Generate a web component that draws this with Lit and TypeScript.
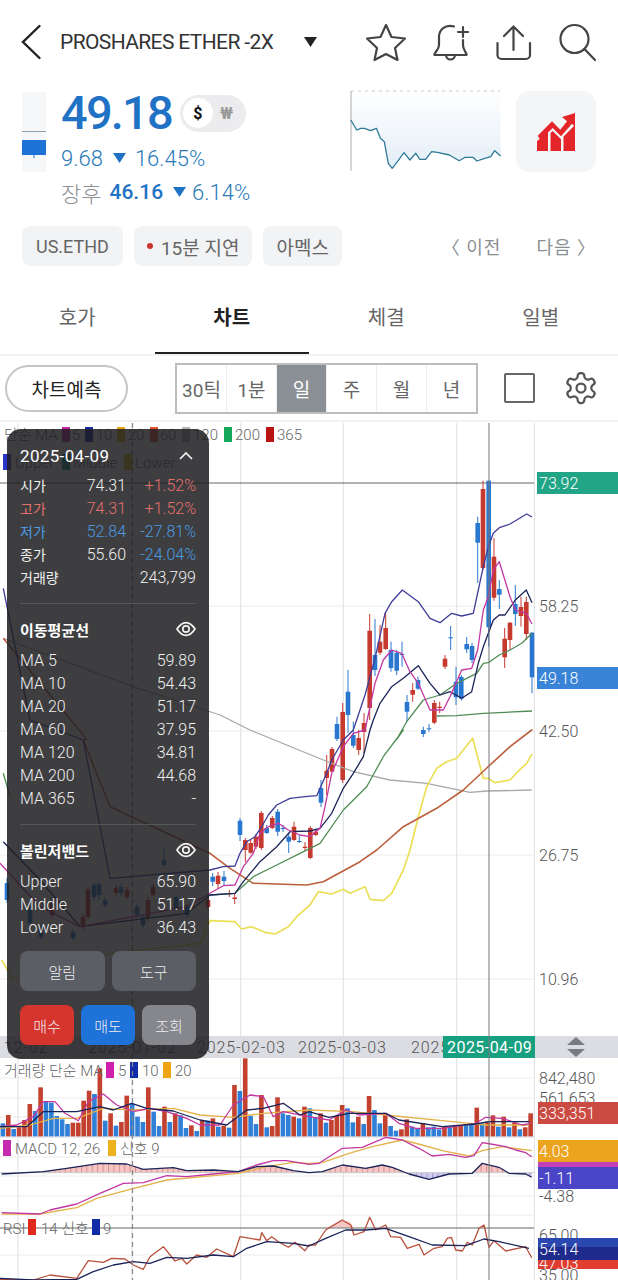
import { LitElement, html, svg, css } from 'lit';
import { customElement } from 'lit/decorators.js';

type Pt = [number, number];
// [x, wickTop, wickBottom, bodyTop, bodyBottom, isUp]
type Candle = [number, number, number, number, number, number];

// traced from 3x crops, so each series carries the crop origin
const traced = (ox: number, oy: number, pts: Pt[]) =>
  pts.map(([x, y]) => `${(ox + x / 3).toFixed(1)},${(oy + y / 3).toFixed(1)}`).join(' ');

const CANDLES: Candle[] = [
  [7, 878, 903, 883, 900, 0], [30, 905, 926, 910, 923, 0], [41, 924, 940, 927, 937, 0], [52, 898, 918, 903, 915, 1],
  [73, 929, 941, 932, 938, 0], [83, 914, 930, 917, 927, 1], [88, 887, 920, 890, 917, 1], [94, 882, 900, 885, 897, 0],
  [99, 882, 900, 884, 895, 0], [105, 897, 908, 900, 905, 0], [116, 885, 896, 888, 893, 1], [121, 884, 896, 887, 893, 0],
  [127, 887, 899, 890, 897, 1], [137, 904, 918, 907, 915, 0], [143, 914, 928, 917, 925, 0], [148, 897, 921, 900, 918, 1],
  [153, 884, 896, 887, 895, 1], [164, 847, 868, 860, 865, 0], [176, 894, 911, 897, 908, 0], [187, 904, 918, 907, 915, 0],
  [208, 897, 910, 900, 907, 1],
  [212.7, 873, 886, 876.7, 881.7, 0], [218, 872, 889, 875.7, 884, 1], [224, 871, 886, 876.7, 881, 0],
  [229.3, 890, 897, 893, 894, 1], [234.7, 894, 904, 897.5, 899, 1], [240, 818, 841, 820.7, 835, 0],
  [245.3, 838, 862, 840, 850, 1], [250.7, 840, 854, 843, 852.7, 1], [256, 834, 849, 836.7, 846.7, 1],
  [261.3, 811, 850, 813, 848, 1], [266.7, 825, 834, 828, 833, 0], [272.3, 816, 829, 818, 828, 1],
  [277.7, 809, 836, 811.7, 831.7, 0], [283, 825, 832, 828, 829, 0], [288.7, 833, 853, 836.7, 841.7, 0],
  [294, 821.7, 841, 826.7, 840, 1], [299.3, 835, 843, 841, 842, 0], [305, 842, 851, 846.7, 848, 1],
  [310.3, 826, 859, 828, 858, 1], [315.7, 830, 836, 831.7, 835, 1], [321, 780, 807, 788, 802.7, 0],
  [326.7, 755, 795, 770.7, 778, 1], [332, 747, 772, 749, 771.7, 1], [337, 716.7, 741, 724, 739, 0],
  [342.7, 703, 783, 712, 780, 1], [348, 670, 733, 691.7, 715, 0], [353.3, 721.7, 748, 735, 745.7, 0],
  [358.7, 730, 755, 738, 750, 1], [364, 713, 753, 723, 732, 1], [369.7, 614, 720, 630.7, 708, 1],
  [375, 619, 676, 655, 670, 0], [380, 625, 655, 641.7, 652.7, 1], [385.7, 613, 650, 628, 649, 1],
  [391, 641.7, 671.7, 650, 668, 0], [396.7, 650, 675, 652.7, 670.7, 0], [402, 641.7, 666.7, 654, 655, 0],
  [407, 695, 721.7, 702, 711.7, 0], [412.7, 683, 701.7, 690, 694.7, 1], [418, 676.7, 690, 680, 688.7, 0],
  [423.3, 726.7, 737, 730, 734, 0], [429, 724, 731.7, 728.3, 729.3, 0], [434.3, 700, 724, 703, 722.7, 1],
  [439.7, 701.7, 713, 706.7, 708, 1], [445, 655, 669, 658.7, 666.7, 1], [450.7, 626, 650, 637.3, 638.3, 0],
  [456, 666.7, 705, 681.7, 697.3, 0], [461.3, 675, 700.7, 677, 698.7, 0], [466.7, 637, 653, 644, 649.3, 0],
  [472, 643, 663, 646, 660, 0], [477.7, 516.7, 583, 523, 542.7, 0], [483, 480.7, 570, 489, 568, 1],
  [488.7, 480.7, 646.7, 480.7, 627.3, 0], [494, 538, 600.7, 556.7, 597.7, 1], [499.3, 580, 609, 589, 594.7, 0],
  [504.7, 628, 668, 638.7, 657.3, 1], [510, 622, 650, 622.7, 640, 1], [515.3, 585, 626, 604, 614, 0],
  [521, 596.7, 626.7, 607, 616, 1], [526.3, 596.7, 640, 602, 634, 1], [532, 632, 693.3, 632.7, 677.3, 0],
];

// bar tops in crop px; positive is red, negative is blue
const VOLUME = [
  -280, 255, -297, 292, 270, 222, -243, 172, -213, -218, -258, -268, -282, 278, 278, 212, 182, -192, 115, -272,
  250, -287, 276, 197, -222, -260, -276, 172, -245, -288, 230, -276, 250, -256, -294, 286, -303, 272, -272, 265,
  -290, 287, -293, 165, -183, 85, -258, -282, 195, -292, 288, 202, -250, -255, 260, -265, 230,
  -235, -262, 250, -278, 270, 258, 225, -235, -277, 260, -282, 198, -240, -280, 252, -288, -302, 298, 268, -290,
  -295, 280, -292, -290, -298, 288, -290, 285, 285, -283, -283, 233, -280, 275, 256, -290, 260, -292, 278, -298, 292, 250,
];

const MID_X = 309;
const LOW_Y = 1030;

const mainLines: { cls: string; pts: string }[] = [
  { cls: 'gray', pts: traced(0, 420, [[10, 655], [400, 800], [660, 885]]) + ' ' + traced(210, 730, [[120, 0], [340, 90], [430, 125], [540, 150], [650, 160], [780, 187], [830, 183], [965, 180]]) },
  { cls: 'yellow', pts: traced(0, 740, [[5, 660], [40, 720], [330, 640], [600, 610]]) + ' ' + traced(210, 730, [[0, 572], [75, 575], [95, 597], [125, 590], [165, 607], [195, 612], [235, 590], [260, 560], [300, 525], [325, 485], [365, 492], [400, 478], [420, 490], [465, 470], [480, 508], [520, 512], [545, 490], [580, 420], [600, 360], [625, 260], [650, 170], [680, 115], [710, 95], [740, 85], [788, 25], [820, 145], [835, 145], [855, 158], [900, 150], [930, 118], [950, 100], [966, 72]]) },
  { cls: 'orange', pts: traced(0, 420, [[10, 655], [130, 800], [260, 958]]) + ' ' + traced(0, 740, [[250, 0], [330, 200], [620, 335]]) + ' ' + traced(210, 730, [[0, 370], [60, 415], [130, 460], [200, 462], [290, 465], [340, 455], [450, 395], [500, 360], [580, 290], [680, 235], [760, 180], [840, 105], [900, 50], [965, 0]]) + ' ' + traced(210, 420, [[966, 928]]) },
  { cls: 'green', pts: traced(210, 420, [[680, 888], [740, 887], [820, 880], [966, 873]]) },
  { cls: 'green', pts: traced(0, 740, [[10, 100], [30, 170]]) },
  { cls: 'green', pts: traced(210, 730, [[0, 495], [75, 490], [130, 440], [200, 405], [270, 370], [330, 340], [400, 240], [470, 170], [520, 80], [580, 0]]) + ' ' + traced(210, 420, [[560, 958], [590, 905], [640, 840], [690, 825], [740, 790], [800, 760], [820, 730], [835, 728], [868, 705], [900, 690], [935, 670], [966, 640]]) },
  { cls: 'navy', pts: traced(0, 740, [[10, 305], [120, 420], [240, 560], [560, 520]]) + ' ' + traced(210, 730, [[0, 495], [75, 490], [100, 455], [150, 395], [200, 350], [240, 305], [300, 303], [330, 295], [365, 250], [400, 175], [430, 130], [460, 80], [480, 0]]) + ' ' + traced(210, 420, [[490, 900], [510, 850], [545, 800], [580, 775], [625, 737], [660, 790], [690, 825], [720, 815], [755, 835], [785, 815], [805, 730], [820, 680], [850, 600], [868, 585], [885, 585], [916, 540], [949, 510], [966, 548]]) },
  { cls: 'magenta', pts: traced(0, 740, [[0, 370], [120, 500], [240, 560], [560, 500]]) + ' ' + traced(210, 730, [[0, 490], [40, 467], [75, 465], [100, 410], [130, 370], [150, 310], [175, 290], [205, 280], [235, 300], [270, 315], [300, 320], [330, 295], [345, 230], [365, 130], [400, 50], [430, 10], [465, 0]]) + ' ' + traced(210, 420, [[495, 790], [520, 720], [545, 690], [575, 700], [600, 755], [625, 790], [660, 870], [700, 870], [720, 830], [755, 750], [785, 745], [803, 690], [820, 570], [835, 530], [850, 450], [868, 425], [900, 530], [916, 570], [949, 580], [966, 612]]) },
  { cls: 'violet', pts: traced(0, 420, [[10, 505], [90, 900]]) + ' ' + traced(0, 740, [[250, 0], [330, 415], [630, 390]]) + ' ' + traced(210, 730, [[0, 420], [40, 410], [75, 408], [90, 370], [110, 335], [135, 320], [155, 290], [175, 255], [200, 225], [240, 205], [285, 200], [320, 197], [350, 130], [365, 90], [400, 30], [430, 0]]) + ' ' + traced(210, 420, [[465, 825], [495, 715], [525, 580], [545, 545], [577, 510], [625, 545], [660, 595], [690, 608], [725, 580], [755, 588], [790, 580], [805, 510], [820, 440], [835, 380], [850, 340], [868, 323], [900, 312], [950, 282], [966, 291]]) },
];

const volLines: { cls: string; pts: string }[] = [
  { cls: 'gold', pts: traced(0, LOW_Y, [[0, 295], [90, 285], [160, 265], [230, 265], [310, 235], [400, 240], [520, 235], [600, 255], [700, 262], [790, 250], [927, 240]]) + ' ' + traced(MID_X, LOW_Y, [[130, 245], [230, 255], [430, 275], [530, 285], [660, 285]]) },
  { cls: 'magenta', pts: traced(0, LOW_Y, [[0, 290], [50, 285], [100, 260], [130, 215], [165, 215], [195, 250], [235, 272], [265, 215], [310, 192], [350, 225], [400, 245], [450, 235], [500, 245], [560, 265], [600, 285], [660, 285], [700, 225], [750, 195], [790, 200], [820, 260], [850, 245], [927, 260]]) + ' ' + traced(MID_X, LOW_Y, [[60, 270], [110, 240], [150, 255], [230, 250], [270, 280], [320, 295], [400, 295], [500, 280], [530, 262], [580, 265], [640, 285], [665, 280]]) },
  { cls: 'navy', pts: traced(0, LOW_Y, [[0, 290], [80, 290], [130, 245], [230, 245], [300, 230], [340, 240], [395, 220], [440, 235], [520, 243], [600, 270], [680, 285], [740, 240], [790, 235], [850, 220], [900, 255], [927, 245]]) + ' ' + traced(MID_X, LOW_Y, [[60, 262], [120, 250], [230, 250], [270, 270], [400, 290], [500, 282], [540, 275], [660, 275]]) },
];

const histPts = traced(0, LOW_Y, [[5, 432], [130, 425], [200, 415], [300, 400], [380, 402], [430, 418], [520, 413], [560, 422], [640, 420], [715, 425], [770, 410], [820, 408], [880, 422], [927, 428]]) + ' ' + traced(MID_X, LOW_Y, [[40, 425], [100, 405], [170, 415], [220, 405], [250, 412], [300, 432], [360, 448], [420, 432], [490, 430], [520, 400], [570, 412], [600, 430], [650, 432], [668, 442]]);

const macdLines: { cls: string; pts: string }[] = [
  { cls: 'gold', pts: traced(0, LOW_Y, [[5, 552], [120, 552], [230, 533], [290, 505], [390, 478], [500, 450], [640, 437], [715, 430], [800, 410], [880, 397], [927, 400]]) + ' ' + traced(MID_X, LOW_Y, [[40, 398], [120, 370], [190, 350], [280, 330], [340, 345], [400, 362], [480, 378], [520, 362], [580, 350], [668, 362]]) },
  { cls: 'magenta', pts: traced(0, LOW_Y, [[5, 548], [120, 552], [150, 540], [230, 522], [300, 490], [370, 460], [430, 458], [500, 437], [560, 440], [640, 432], [715, 425], [770, 405], [820, 392], [860, 392], [927, 403]]) + ' ' + traced(MID_X, LOW_Y, [[30, 400], [100, 355], [160, 352], [230, 322], [280, 330], [330, 355], [370, 378], [420, 373], [470, 382], [495, 377], [520, 338], [545, 342], [590, 350], [620, 360], [650, 368], [668, 380]]) },
  { cls: 'navy', pts: histPts },
];

const rsiLines: { cls: string; pts: string }[] = [
  { cls: 'brick', pts: traced(0, LOW_Y, [[0, 748], [100, 750], [150, 735], [230, 745], [265, 692], [310, 697], [335, 685], [375, 687], [400, 705], [430, 718], [450, 680], [490, 650], [525, 693], [545, 685], [560, 702], [590, 675], [620, 682], [650, 657], [700, 680], [720, 620], [780, 630], [785, 608], [800, 632], [815, 620], [835, 635], [865, 652], [885, 637], [915, 662], [927, 645]]) + ' ' + traced(MID_X, LOW_Y, [[20, 645], [50, 600], [100, 570], [125, 585], [135, 615], [165, 605], [182, 562], [200, 600], [230, 585], [245, 620], [275, 622], [295, 655], [330, 643], [345, 675], [375, 655], [400, 650], [415, 625], [427, 622], [440, 660], [460, 663], [475, 637], [490, 645], [510, 595], [525, 585], [540, 652], [555, 632], [590, 663], [650, 650], [668, 683]]) },
  { cls: 'navy', pts: traced(0, LOW_Y, [[0, 745], [100, 750], [230, 748], [280, 725], [340, 705], [400, 695], [450, 700], [500, 682], [560, 685], [640, 675], [700, 680], [740, 655], [800, 635], [880, 640], [927, 648]]) + ' ' + traced(MID_X, LOW_Y, [[50, 625], [110, 600], [170, 600], [230, 595], [300, 620], [370, 645], [470, 647], [525, 627], [570, 635], [660, 655]]) },
];

const SPARK: Pt[] = [
  [890, 360], [905, 390], [915, 385], [925, 385], [940, 392], [955, 385], [965, 415], [975, 425], [985, 490], [995, 505],
  [1005, 490], [1025, 458], [1040, 480], [1055, 460], [1065, 478], [1080, 478], [1095, 455], [1110, 457], [1140, 465],
  [1165, 482], [1180, 472], [1200, 472], [1210, 483], [1230, 475], [1245, 470], [1255, 452], [1270, 468],
];

const MA_ROWS = [
  ['MA 5', '59.89'], ['MA 10', '54.43'], ['MA 20', '51.17'], ['MA 60', '37.95'],
  ['MA 120', '34.81'], ['MA 200', '44.68'], ['MA 365', '-'],
];
const BB_ROWS = [['Upper', '65.90'], ['Middle', '51.17'], ['Lower', '36.43']];
const OHLC = [
  { label: '시가', value: '74.31', pct: '+1.52%', tone: '', pctTone: 'up' },
  { label: '고가', value: '74.31', pct: '+1.52%', tone: 'up', pctTone: 'up' },
  { label: '저가', value: '52.84', pct: '-27.81%', tone: 'down', pctTone: 'down' },
  { label: '종가', value: '55.60', pct: '-24.04%', tone: '', pctTone: 'down' },
];
const PERIODS = ['30틱', '1분', '일', '주', '월', '년'];

@customElement('app-root')
export class AppRoot extends LitElement {
  static styles = css`
    :host {
      display: block;
      width: 618px;
      height: 1280px;
      overflow: hidden;
      background: #fff;
      font-family: Roboto, "Noto Sans CJK KR", sans-serif;
      color: #333;
    }

    .top {
      display: flex;
      align-items: center;
      height: 84px;
      padding-left: 20px;
    }
    .back { width: 22px; height: 36px; margin-right: 18px; }
    .title { font-size: 21px; color: #333; letter-spacing: -0.62px; white-space: nowrap; }
    .caret { margin-left: 31px; width: 13px; height: 10px; }
    .actions { display: flex; gap: 28px; margin-left: auto; padding-right: 22px; }
    .actions svg { width: 36px; height: 36px; overflow: visible; fill: none; stroke: #444; stroke-width: 2.2; stroke-linecap: round; stroke-linejoin: round; }

    .quote { display: flex; align-items: flex-start; height: 134px; padding: 8px 22px 0; box-sizing: content-box; }
    .mini { width: 24px; height: 80px; margin-right: 15px; overflow: hidden; flex: none; }
    .prices { width: 289px; flex: none; }
    .price-row { display: flex; align-items: center; height: 42px; }
    .price { font-size: 47px; line-height: 42px; font-weight: 500; color: #1f72c4; letter-spacing: -1.8px; }
    .currency { display: flex; align-items: center; width: 66px; height: 37px; margin-left: 8px; border-radius: 19px; background: #ececee; }
    .currency b { display: flex; align-items: center; justify-content: center; width: 30px; height: 30px; margin-left: 3px; border-radius: 50%; background: #fff; font-size: 16px; color: #111; }
    .currency span { margin-left: 7px; font-size: 16px; font-weight: 700; color: #999; }
    .change { display: flex; align-items: center; height: 36px; margin-top: 6px; font-size: 22px; font-weight: 300; color: #2a7ab8; }
    .change.after { height: 34px; margin-top: -1px; }
    .tri { width: 13px; height: 10px; margin: 0 9px 0 10px; fill: #1f72c4; }
    .change.after .tri { margin: 0 6px 0 10px; }
    .after-label { font-size: 22px; color: #8b9095; margin-right: 8px; }
    .after-price { font-weight: 500; color: #1f72c4; font-size: 21px; }
    .spark { width: 151px; height: 82px; margin-top: -2px; flex: none; }
    .badge { display: flex; align-items: center; justify-content: center; width: 80px; height: 81px; margin: -1px 0 0 15px; border-radius: 14px; background: #f4f5f7; flex: none; }
    .badge svg { width: 38px; height: 38px; }

    .chips { display: flex; align-items: center; height: 40px; padding: 0 22px; gap: 11px; }
    .chip { display: flex; align-items: center; height: 40px; padding: 0 13px; border-radius: 8px; background: #f2f3f4; font-size: 19px; color: #666; white-space: nowrap; }
    .chip.code { font-size: 18px; padding: 0 14px; }
    .chip i { width: 6px; height: 6px; margin-right: 8px; border-radius: 50%; background: #c9342c; }
    .pager { display: flex; gap: 35px; margin-left: auto; font-size: 18px; color: #8a8f94; letter-spacing: 1px; white-space: nowrap; }

    .tabs { display: grid; grid-template-columns: repeat(4, 154.5px); height: 74px; margin-top: 14px; }
    .tab { display: flex; align-items: center; justify-content: center; font-size: 20px; color: #666; border-bottom: 2px solid transparent; }
    .tab.on { font-weight: 700; color: #222; border-bottom-color: #222; }

    .tools { display: flex; align-items: center; height: 68px; border-top: 2px solid #f1f1f2; border-bottom: 2px solid #f1f1f2; box-sizing: border-box; }
    .predict { display: flex; align-items: center; justify-content: center; width: 123px; height: 47px; margin-left: 5px; box-sizing: border-box; border: 2px solid #c6c6c6; border-radius: 24px; font-size: 19px; color: #222; }
    .periods { display: flex; width: 303px; height: 51px; margin-left: 47px; box-sizing: border-box; border: 2px solid #bdbdbd; }
    .period { flex: 1; display: flex; align-items: center; justify-content: center; border-right: 1px solid #eee; font-size: 19px; color: #666; white-space: nowrap; }
    .period:last-child { border-right: 0; }
    .period.on { background: #8b8f96; color: #fff; }
    .square { width: 31px; height: 30px; margin-left: 26px; box-sizing: border-box; border: 2.5px solid #666; border-radius: 2px; }
    .gear { width: 36px; height: 36px; margin-left: 28px; fill: none; stroke: #555; stroke-width: 1.5; stroke-linejoin: round; }

    .chart { position: relative; height: 858px; }
    .chart > svg { display: block; width: 618px; height: 858px; }
    polyline { fill: none; stroke-width: 1.3; stroke-linejoin: round; }
    .gray { stroke: #a8a8a6; }
    .yellow { stroke: #ecdf58; stroke-width: 1.7; }
    .orange { stroke: #bc5f3c; stroke-width: 1.6; }
    .green { stroke: #4f8d55; }
    .navy { stroke: #1b2458; }
    .magenta { stroke: #c237a2; }
    .violet { stroke: #3f3c98; }
    .gold { stroke: #e3b24a; }
    .brick { stroke: #b8503c; }
    .grid line { stroke: #ececee; stroke-width: 1; }
    .grid .v { stroke: #dedfe3; }
    .axis-text { font-size: 16px; font-weight: 300; fill: #555; }
    .date-text { font-size: 16px; font-weight: 300; fill: #555; letter-spacing: 0.85px; }
    .legend { font-size: 15px; font-weight: 300; fill: #666; }
    .tag-text { font-size: 16px; font-weight: 300; fill: #fff; }
    .tag-date { font-size: 16px; fill: #fff; letter-spacing: 0.45px; }

    .panel {
      position: absolute;
      left: 7px;
      top: 7px;
      width: 202px;
      height: 630px;
      box-sizing: border-box;
      padding: 15px 13px 13px;
      border-radius: 14px;
      background: rgba(30, 30, 34, 0.86);
      color: #f0f0f0;
      font-weight: 300;
    }
    .head { display: flex; align-items: center; justify-content: space-between; height: 24px; font-size: 17px; font-weight: 400; color: #fff; letter-spacing: 0.35px; }
    .head.strong { font-size: 15px; font-weight: 700; letter-spacing: 0; }
    .head svg { width: 20px; height: 16px; fill: none; stroke: #f2f2f2; stroke-width: 1.7; }
    .rows { margin-top: 5.5px; }
    .ohlc { display: grid; grid-template-columns: 42px 64px 70px; align-items: center; height: 23px; font-size: 16px; white-space: nowrap; }
    .ohlc .k { font-size: 14px; font-weight: 400; }
    .ohlc span:nth-child(2), .ohlc span:nth-child(3) { text-align: right; }
    .ohlc .wide { grid-column: 2 / 4; text-align: right; }
    .up { color: #e5716b; }
    .down { color: #4b9be0; }
    .rule { height: 1px; margin: 14.5px 0 13px; background: #56565b; }
    .list { margin-top: 7.5px; }
    .line { display: flex; justify-content: space-between; align-items: center; height: 23px; font-size: 16px; }
    .buttons { display: grid; grid-template-columns: 1fr 1fr; gap: 7px; margin-top: 12.5px; }
    .buttons.three { grid-template-columns: repeat(3, 1fr); margin-top: 14px; }
    .btn { display: flex; align-items: center; justify-content: center; height: 40px; border-radius: 8px; background: #5b5e64; font-size: 15px; color: #eee; }
    .btn.buy { background: #d5352d; }
    .btn.sell { background: #1e72d8; }
    .btn.view { background: #85878d; }
  `;

  private candle([x, wt, wb, bt, bb, up]: Candle) {
    const color = up ? '#c6392f' : '#2a77cf';
    return svg`
      <line x1=${x} x2=${x} y1=${wt} y2=${wb} stroke=${color} stroke-width="1"></line>
      <rect x=${x - 2.3} y=${bt} width="4.6" height=${Math.max(bb - bt, 1)} fill=${color}></rect>`;
  }

  private swatch(x: number, y: number, color: string, h = 15) {
    return svg`<rect x=${x} y=${y} width="8" height=${h} fill=${color}></rect>`;
  }

  private tag(y: number, color: string, label: string, x = 537) {
    return svg`
      <rect x=${x} y=${y} width=${618 - x} height="22" fill=${color}></rect>
      <text class="tag-text" x="539" y=${y + 17}>${label}</text>`;
  }

  private renderChart() {
    const hLines = [606, 731, 855, 979, 1078, 1098, 1117, 1157, 1176, 1196, 1215, 1255];
    const vLines = [18, 132, 240.7, 343.3, 456.7];
    const axisLabels: [number, string][] = [[606, '58.25'], [731, '42.50'], [855, '26.75'], [979, '10.96']];
    return html`
      <svg viewBox="0 422 618 858">
        <defs>
          <pattern id="histUp" width="5.4" height="8" patternUnits="userSpaceOnUse">
            <rect width="5.4" height="8" fill="#f6c6c4"></rect>
            <rect width="1" height="8" fill="#d98f8d"></rect>
          </pattern>
          <pattern id="histDown" width="5.4" height="8" patternUnits="userSpaceOnUse">
            <rect width="5.4" height="8" fill="#d2cdf0"></rect>
            <rect width="1" height="8" fill="#9c96d4"></rect>
          </pattern>
          <clipPath id="aboveZero"><rect x="0" y="1100" width="534" height="72.7"></rect></clipPath>
          <clipPath id="belowZero"><rect x="0" y="1172.7" width="534" height="40"></rect></clipPath>
        </defs>

        <g class="grid">
          ${hLines.map((y) => svg`<line x1="0" x2="534" y1=${y} y2=${y}></line>`)}
          ${vLines.map((x) => svg`<line class="v" x1=${x} x2=${x} y1="423" y2="1280"></line>`)}
          <line class="v" x1="534.3" x2="534.3" y1="423" y2="1280"></line>
        </g>
        <line x1="0" x2="534" y1="483" y2="483" stroke="#666" stroke-width="1"></line>

        ${CANDLES.map((c) => this.candle(c))}
        ${mainLines.map((l) => svg`<polyline class=${l.cls} points=${l.pts}></polyline>`)}

        <text class="legend" x="4" y="440">단순 MA</text>
        ${this.swatch(62, 427, '#c2259f')}<text class="legend" x="72" y="440">5</text>
        ${this.swatch(85, 427, '#1630a0')}<text class="legend" x="96" y="440">10</text>
        ${this.swatch(117, 427, '#e8a414')}<text class="legend" x="128" y="440">20</text>
        ${this.swatch(150, 427, '#e4502a')}<text class="legend" x="160" y="440">60</text>
        ${this.swatch(182, 427, '#b4b4b4')}<text class="legend" x="193" y="440">120</text>
        ${this.swatch(224, 427, '#14a85a')}<text class="legend" x="235" y="440">200</text>
        ${this.swatch(266, 427, '#b81414')}<text class="legend" x="277" y="440">365</text>
        ${this.swatch(3, 454, '#2a35c8', 16)}<text class="legend" x="15" y="468">Upper</text>
        ${this.swatch(62, 454, '#1f8f6a', 16)}<text class="legend" x="73" y="468">Middle</text>
        ${this.swatch(124, 454, '#d8b020', 16)}<text class="legend" x="135" y="468">Lower</text>

        ${this.tag(472, '#22a586', '73.92')}
        ${this.tag(667, '#3a84d8', '49.18')}
        ${axisLabels.map(([y, t]) => svg`<text class="axis-text" x="539" y=${y + 6}>${t}</text>`)}

        <rect x="0" y="1036" width="618" height="22" fill="#dcdde3"></rect>
        <text class="date-text" x="4" y="1053">12-02</text>
        <text class="date-text" x="88" y="1053">2025-01-02</text>
        <text class="date-text" x="197" y="1053">2025-02-03</text>
        <text class="date-text" x="298" y="1053">2025-03-03</text>
        <text class="date-text" x="411" y="1053">2025</text>
        <rect x="443" y="1036" width="92" height="22" fill="#17a080"></rect>
        <text class="tag-date" x="447" y="1053">2025-04-09</text>
        <path d="M576 1037l9 8h-18zM576 1057l9-8h-18z" fill="#777b84"></path>

        ${VOLUME.map((v, i) => {
          const top = LOW_Y + Math.abs(v) / 3;
          return svg`<rect x=${0.6 + i * 5.385} y=${top} width="4.6" height=${1136.7 - top} fill=${v > 0 ? '#c2412f' : '#2f80d6'}></rect>`;
        })}
        ${volLines.map((l) => svg`<polyline class=${l.cls} points=${l.pts}></polyline>`)}
        <text class="legend" x="4" y="1076">거래량 단순 MA</text>
        ${this.swatch(106, 1062, '#d21fae', 16)}<text class="legend" x="118" y="1076">5</text>
        ${this.swatch(130, 1062, '#0f2ba8', 16)}<text class="legend" x="142" y="1076">10</text>
        ${this.swatch(163, 1062, '#f0a414', 16)}<text class="legend" x="175" y="1076">20</text>
        <line x1="0" x2="534" y1="1137" y2="1137" stroke="#d8d8dc"></line>

        <polygon points="${histPts} 532,1172.7 2,1172.7" fill="url(#histUp)" clip-path="url(#aboveZero)"></polygon>
        <polygon points="${histPts} 532,1172.7 2,1172.7" fill="url(#histDown)" clip-path="url(#belowZero)"></polygon>
        <line x1="0" x2="534" y1="1172.7" y2="1172.7" stroke="#c8c8cc"></line>
        ${macdLines.map((l) => svg`<polyline class=${l.cls} points=${l.pts}></polyline>`)}
        ${this.swatch(3, 1140, '#c62cb0', 16)}<text class="legend" x="15" y="1154">MACD 12, 26</text>
        ${this.swatch(108, 1140, '#efb21c', 16)}<text class="legend" x="120" y="1154">신호 9</text>

        <polygon points="326,1228 341,1220 350,1222 354,1228" fill="#f6c6c4"></polygon>
        <line x1="0" x2="534" y1="1228" y2="1228" stroke="#999" stroke-width="1.5"></line>
        ${rsiLines.map((l) => svg`<polyline class=${l.cls} points=${l.pts}></polyline>`)}
        <text class="legend" x="3" y="1234">RSI</text>
        ${this.swatch(28, 1219, '#e0281c', 16)}<text class="legend" x="41" y="1234">14 신호</text>
        ${this.swatch(92, 1219, '#0f2ba8', 16)}<text class="legend" x="103" y="1234">9</text>

        <text class="axis-text" x="539" y="1084">842,480</text>
        <text class="axis-text" x="539" y="1104">561,653</text>
        ${this.tag(1102, '#cb4a42', '333,351', 538)}
        <rect x="538" y="1162" width="80" height="6" fill="#c341b6"></rect>
        ${this.tag(1140, '#eca31d', '4.03', 538)}
        ${this.tag(1167, '#4a44c6', '-1.11', 538)}
        <text class="axis-text" x="539" y="1202">-4.38</text>
        <text class="axis-text" x="539" y="1241">65.00</text>
        <rect x="538" y="1260" width="80" height="9" fill="#e03c30"></rect>
        <text class="tag-text" x="539" y="1269">47.03</text>
        <rect x="538" y="1238" width="80" height="22" fill="#2a48b0"></rect>
        <rect x="538" y="1247" width="80" height="13" fill="#1e2a8c"></rect>
        <text class="tag-text" x="539" y="1255">54.14</text>
        <text class="axis-text" x="539" y="1281">35.00</text>

        <line x1="489" x2="489" y1="423" y2="1280" stroke="#777" stroke-width="1"></line>
        <line x1="132.5" x2="132.5" y1="423" y2="1280" stroke="#888" stroke-width="1.2" stroke-dasharray="5 4"></line>
      </svg>`;
  }

  private eye() {
    return html`<svg viewBox="0 0 20 16">
      <path d="M1 8c3-4.600 6-6.400 9-6.400s6 1.800 9 6.400c-3 4.600-6 6.400-9 6.400S4 12.600 1 8z"></path>
      <circle cx="10" cy="8" r="3.200"></circle>
    </svg>`;
  }

  private renderPanel() {
    return html`
      <div class="panel">
        <div class="head">
          <span>2025-04-09</span>
          <svg viewBox="0 0 20 16"><path d="M4 11l6-6 6 6"></path></svg>
        </div>
        <div class="rows">
          ${OHLC.map((r) => html`
            <div class="ohlc">
              <span class="k ${r.tone}">${r.label}</span>
              <span class=${r.tone}>${r.value}</span>
              <span class=${r.pctTone}>${r.pct}</span>
            </div>`)}
          <div class="ohlc"><span class="k">거래량</span><span class="wide">243,799</span></div>
        </div>
        <div class="rule"></div>
        <div class="head strong"><span>이동평균선</span>${this.eye()}</div>
        <div class="list">
          ${MA_ROWS.map(([k, v]) => html`<div class="line"><span>${k}</span><span>${v}</span></div>`)}
        </div>
        <div class="rule"></div>
        <div class="head strong"><span>볼린저밴드</span>${this.eye()}</div>
        <div class="list">
          ${BB_ROWS.map(([k, v]) => html`<div class="line"><span>${k}</span><span>${v}</span></div>`)}
        </div>
        <div class="buttons">
          <div class="btn">알림</div>
          <div class="btn">도구</div>
        </div>
        <div class="buttons three">
          <div class="btn buy">매수</div>
          <div class="btn sell">매도</div>
          <div class="btn view">조회</div>
        </div>
      </div>`;
  }

  private renderSpark() {
    const pts = SPARK.map(([x, y]) => `${(x / 2.537 - 350).toFixed(1)},${(y / 3 - 90).toFixed(1)}`).join(' ');
    return html`
      <svg class="spark" viewBox="0 0 151 82">
        <defs>
          <linearGradient id="sparkFill" gradientUnits="userSpaceOnUse" x1="0" y1="0" x2="0" y2="78">
            <stop offset="0" stop-color="#ffffff"></stop>
            <stop offset="1" stop-color="#e4eef7"></stop>
          </linearGradient>
        </defs>
        <polygon points="1,1 150.600,1 ${pts.split(' ').reverse().join(' ')}" fill="url(#sparkFill)"></polygon>
        <line x1="1" x2="150" y1="1" y2="1" stroke="#c8ccd0" stroke-dasharray="3 4"></line>
        <line x1="1" x2="1" y1="1" y2="81" stroke="#a8acb0"></line>
        <polyline points=${pts} style="stroke:#2e7a96;stroke-width:1.300"></polyline>
      </svg>`;
  }

  render() {
    return html`
      <div class="top">
        <svg class="back" viewBox="0 0 22 36"><path d="M19.500 2L3 18l16.500 16" fill="none" stroke="#222" stroke-width="2.400" stroke-linecap="round"></path></svg>
        <span class="title">PROSHARES ETHER -2X</span>
        <svg class="caret" viewBox="0 0 13 10"><path d="M0 0h13L6.500 10z" fill="#222"></path></svg>
        <div class="actions">
          <svg viewBox="0 0 36 36"><path d="M18 1l5.500 12 13.500 1.500-10 9.500 2.500 12L18 30 6.500 36 9 24-1 14.500 12.500 13z"></path></svg>
          <svg viewBox="0 0 36 36"><path d="M22 2.500C13 0 7 6 7 13v8c0 4-3 6-4.500 9v1h32v-1c-1.500-3-3.500-5-3.500-9v-5M31 3v10M26 8h10M14 31a4.500 4.500 0 0 0 9 0"></path></svg>
          <svg viewBox="0 0 36 36"><path d="M1.500 19v12a4 4 0 0 0 4 4H30a4 4 0 0 0 4-4V19M17.500 26V3M8 12l9.500-9.500L27 12"></path></svg>
          <svg viewBox="0 0 36 36"><circle cx="14.500" cy="15" r="14"></circle><path d="M24.500 25L35 36"></path></svg>
        </div>
      </div>

      <div class="quote">
        <svg class="mini" viewBox="0 0 24 80">
          <rect width="24" height="80" fill="#f6f7f8"></rect>
          <line x1="0" x2="24" y1="39.500" y2="39.500" stroke="#8fa0b0"></line>
          <rect y="48" width="24" height="15" fill="#1d72d6"></rect>
          <rect x="11.500" y="63" width="1" height="3" fill="#1d72d6"></rect>
        </svg>
        <div class="prices">
          <div class="price-row">
            <span class="price">49.18</span>
            <div class="currency"><b>$</b><span>₩</span></div>
          </div>
          <div class="change">
            <span>9.68</span>
            <svg class="tri" viewBox="0 0 13 10"><path d="M0 0h13L6.500 10z"></path></svg>
            <span>16.45%</span>
          </div>
          <div class="change after">
            <span class="after-label">장후</span>
            <span class="after-price">46.16</span>
            <svg class="tri" viewBox="0 0 13 10"><path d="M0 0h13L6.500 10z"></path></svg>
            <span>6.14%</span>
          </div>
        </div>
        ${this.renderSpark()}
        <div class="badge">
          <svg viewBox="0 0 38 38">
            <path d="M.7 22.700L15 8.300l8.300 8.400L30 8.300 25 4 38 0v14l-3-3.300L24 23.300 15.700 15 3.300 26.700z" fill="#e4262a"></path>
            <path d="M0 28.300L11 18v20H0zM13.500 20l2.200-2 8.300 8.200V38H13.500zM26.500 23.500L38 12v26H26.500z" fill="#e4262a"></path>
          </svg>
        </div>
      </div>

      <div class="chips">
        <div class="chip code">US.ETHD</div>
        <div class="chip"><i></i>15분 지연</div>
        <div class="chip">아멕스</div>
        <div class="pager"><span>〈 이전</span><span>다음 〉</span></div>
      </div>

      <div class="tabs">
        <div class="tab">호가</div>
        <div class="tab on">차트</div>
        <div class="tab">체결</div>
        <div class="tab">일별</div>
      </div>

      <div class="tools">
        <div class="predict">차트예측</div>
        <div class="periods">
          ${PERIODS.map((p) => html`<div class="period ${p === '일' ? 'on' : ''}">${p}</div>`)}
        </div>
        <div class="square"></div>
        <svg class="gear" viewBox="0 0 24 24">
          <path d="M12.220 2h-.44a2 2 0 0 0-2 2v.18a2 2 0 0 1-1 1.730l-.43.25a2 2 0 0 1-2 0l-.15-.08a2 2 0 0 0-2.730.73l-.22.38a2 2 0 0 0 .73 2.730l.15.1a2 2 0 0 1 1 1.720v.51a2 2 0 0 1-1 1.740l-.15.09a2 2 0 0 0-.73 2.730l.22.38a2 2 0 0 0 2.730.73l.15-.08a2 2 0 0 1 2 0l.43.25a2 2 0 0 1 1 1.730V20a2 2 0 0 0 2 2h.44a2 2 0 0 0 2-2v-.18a2 2 0 0 1 1-1.730l.43-.25a2 2 0 0 1 2 0l.15.08a2 2 0 0 0 2.730-.73l.22-.39a2 2 0 0 0-.73-2.730l-.15-.08a2 2 0 0 1-1-1.740v-.5a2 2 0 0 1 1-1.740l.15-.09a2 2 0 0 0 .73-2.730l-.22-.38a2 2 0 0 0-2.730-.73l-.15.08a2 2 0 0 1-2 0l-.43-.25a2 2 0 0 1-1-1.730V4a2 2 0 0 0-2-2z"></path>
          <circle cx="12" cy="12" r="3"></circle>
        </svg>
      </div>

      <div class="chart">
        ${this.renderChart()}
        ${this.renderPanel()}
      </div>
    `;
  }
}
